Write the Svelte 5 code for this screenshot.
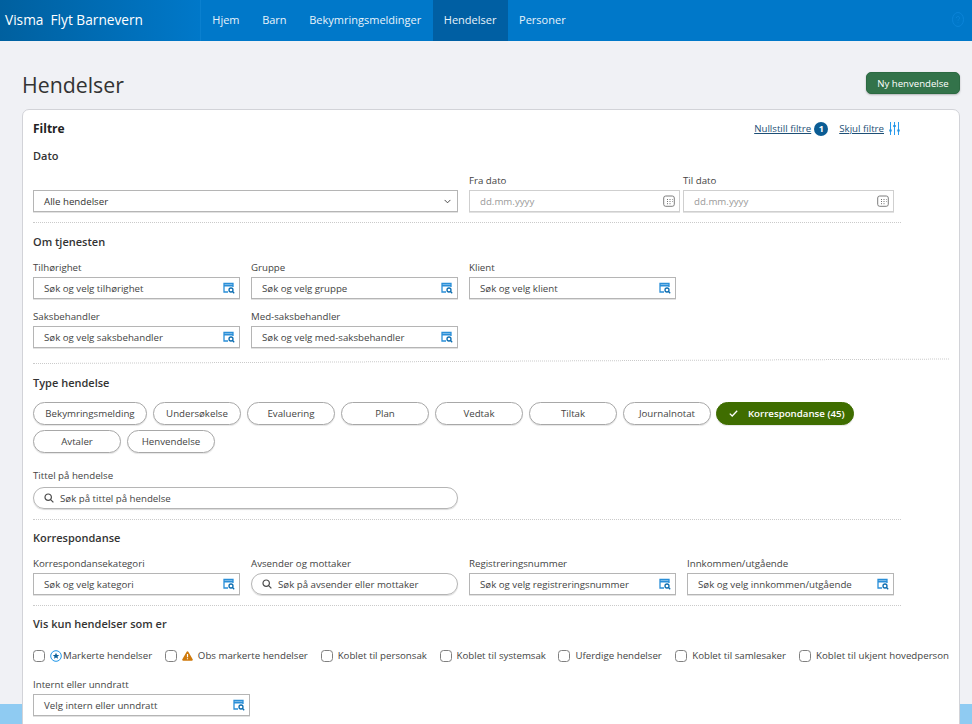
<script lang="ts">
	const nav = ['Hjem', 'Barn', 'Bekymringsmeldinger', 'Hendelser', 'Personer'];
	const chips = [
		{ label: 'Bekymringsmelding', w: 114 },
		{ label: 'Undersøkelse', w: 88 },
		{ label: 'Evaluering', w: 88 },
		{ label: 'Plan', w: 88 },
		{ label: 'Vedtak', w: 88 },
		{ label: 'Tiltak', w: 88 },
		{ label: 'Journalnotat', w: 88 }
	];
	const checks = [
		{ label: 'Koblet til personsak', w: 119 },
		{ label: 'Koblet til systemsak', w: 119 },
		{ label: 'Uferdige hendelser', w: 117 },
		{ label: 'Koblet til samlesaker', w: 124 },
		{ label: 'Koblet til ukjent hovedperson', w: 150 }
	];
</script>

{#snippet lookup()}
	<svg class="lookup" viewBox="0 0 12 12" width="12" height="12" aria-hidden="true">
		<path d="M5 10H1V1.500h9V5" fill="none" stroke="#2a8fd8" stroke-width="1.300" />
		<path d="M1 3.500h9" stroke="#2a8fd8" stroke-width="2" />
		<circle cx="8" cy="8" r="2" fill="none" stroke="#0b6cb0" stroke-width="1.300" />
		<path d="M9.500 9.500l1.700 1.700" stroke="#0b6cb0" stroke-width="1.300" />
	</svg>
{/snippet}

{#snippet calendar()}
	<svg class="lookup" viewBox="0 0 12 12" width="12" height="12" aria-hidden="true">
		<rect x="0.700" y="1" width="10.600" height="10.300" rx="2" fill="none" stroke="#7d7d7d" />
		<path d="M4 4.500h1M6.500 4.500h1M9 4.500h.6M4 6.500h1M6.500 6.500h1M9 6.500h.6M4 8.700h1M6.500 8.700h1" stroke="#6f6f6f" />
	</svg>
{/snippet}

{#snippet searchIcon()}
	<svg viewBox="0 0 10 10" width="10" height="10" aria-hidden="true">
		<circle cx="4.200" cy="4.200" r="3.200" fill="none" stroke="#4a4a4a" stroke-width="1.200" />
		<path d="M6.600 6.600l2.800 2.800" stroke="#4a4a4a" stroke-width="1.200" />
	</svg>
{/snippet}

{#snippet field(label: string, placeholder: string, width: number)}
	<div class="field" style="width:{width}px">
		<span class="label">{label}</span>
		<div class="input">
			<span>{placeholder}</span>
			{@render lookup()}
		</div>
	</div>
{/snippet}

{#snippet dateField(label: string, width: number)}
	<div class="field" style="width:{width}px">
		<span class="label">{label}</span>
		<div class="input date">
			<span>dd.mm.yyyy</span>
			{@render calendar()}
		</div>
	</div>
{/snippet}

{#snippet chip(label: string, width: number)}
	<button class="chip" style="width:{width}px">{label}</button>
{/snippet}

<header class="topbar">
	<div class="brand">Visma&nbsp; Flyt Barnevern</div>
	<nav>
		{#each nav as item}
			<span class="nav-item" class:active={item === 'Hendelser'}>{item}</span>
		{/each}
	</nav>
	<svg class="help" viewBox="0 0 12 15" width="12" height="15" aria-hidden="true">
		<ellipse cx="6" cy="7.500" rx="5.500" ry="7" fill="none" stroke="#0b84d8" />
		<path d="M4.400 6a1.600 1.600 0 1 1 2.300 1.500c-.5.3-.7.6-.7 1.200M6 10.400v.6" fill="none" stroke="#0b84d8" />
	</svg>
</header>

<div class="page">
	<div class="title-row">
		<h1>Hendelser</h1>
		<button class="primary">Ny henvendelse</button>
	</div>

	<main class="card">
		<div class="card-head">
			<h2>Filtre</h2>
			<div class="head-actions">
				<a href="#nullstill">Nullstill filtre</a>
				<span class="count">1</span>
				<a class="hide" href="#skjul">Skjul filtre</a>
				<svg viewBox="0 0 11 13" width="11" height="13" aria-hidden="true">
					<path d="M1.500 0v13M5.500 0v13M9.500 0v13" stroke="#2a9df0" stroke-width="1" />
					<path d="M.3 8.500h2.400M4.300 4h2.400M8.300 8.500h2.400" stroke="#1f8fe0" stroke-width="2" />
				</svg>
			</div>
		</div>

		<h3 class="dato">Dato</h3>
		<div class="row dates">
			<div class="select">
				<span>Alle hendelser</span>
				<svg viewBox="0 0 8 5" width="7" height="5" aria-hidden="true">
					<path d="M.7.7L4 4l3.300-3.300" fill="none" stroke="#333" stroke-width="1" />
				</svg>
			</div>
			<div class="date-pair">
				{@render dateField('Fra dato', 211)}
				{@render dateField('Til dato', 211)}
			</div>
		</div>
		<div class="divider short first"></div>

		<h3>Om tjenesten</h3>
		<div class="row">
			{@render field('Tilhørighet', 'Søk og velg tilhørighet', 207)}
			{@render field('Gruppe', 'Søk og velg gruppe', 207)}
			{@render field('Klient', 'Søk og velg klient', 207)}
		</div>
		<div class="row second">
			{@render field('Saksbehandler', 'Søk og velg saksbehandler', 207)}
			{@render field('Med-saksbehandler', 'Søk og velg med-saksbehandler', 207)}
		</div>
		<div class="divider wide"></div>

		<h3>Type hendelse</h3>
		<div class="chips">
			{#each chips as c}
				{@render chip(c.label, c.w)}
			{/each}
			<button class="chip selected">
				<svg viewBox="0 0 9 7" width="9" height="7" aria-hidden="true">
					<path d="M.8 3.600l2.400 2.400L8.200.8" fill="none" stroke="#fff" stroke-width="1.300" />
				</svg>
				Korrespondanse (45)
			</button>
			{@render chip('Avtaler', 88)}
			{@render chip('Henvendelse', 88)}
		</div>
		<div class="field title-field">
			<span class="label">Tittel på hendelse</span>
			<div class="input search">
				{@render searchIcon()}
				<span>Søk på tittel på hendelse</span>
			</div>
		</div>
		<div class="divider short"></div>

		<h3>Korrespondanse</h3>
		<div class="row">
			{@render field('Korrespondansekategori', 'Søk og velg kategori', 207)}
			<div class="field" style="width:207px">
				<span class="label">Avsender og mottaker</span>
				<div class="input search">
					{@render searchIcon()}
					<span>Søk på avsender eller mottaker</span>
				</div>
			</div>
			{@render field('Registreringsnummer', 'Søk og velg registreringsnummer', 207)}
			{@render field('Innkommen/utgående', 'Søk og velg innkommen/utgående', 207)}
		</div>
		<div class="divider short"></div>

		<h3>Vis kun hendelser som er</h3>
		<div class="checks">
			<label class="check" style="width:132px">
				<span class="box"></span>
				<svg class="star" viewBox="0 0 12 12" width="12" height="12" aria-hidden="true">
					<circle cx="6" cy="6" r="5.300" fill="none" stroke="#1f96e8" />
					<path d="M6 2.800l1 2.100 2.200.2-1.700 1.500.5 2.200L6 7.600 4 8.800l.5-2.200L2.800 5.100 5 4.900z" fill="#0b5f99" />
				</svg>
				Markerte hendelser
			</label>
			<label class="check" style="width:156px">
				<span class="box"></span>
				<svg viewBox="0 0 12 11" width="11" height="10" aria-hidden="true">
					<path d="M6 .3a1 1 0 0 1 .9.5l4.800 8.400a1 1 0 0 1-.9 1.500H1.200a1 1 0 0 1-.9-1.500L5.100.8A1 1 0 0 1 6 .3z" fill="#cf7a0c" />
					<path d="M6 3.200v3.800M6 8v1.100" stroke="#fff" stroke-width="1.300" />
				</svg>
				Obs markerte hendelser
			</label>
			{#each checks as c}
				<label class="check" style="width:{c.w}px"><span class="box"></span>{c.label}</label>
			{/each}
		</div>
		{@render field('Internt eller unndratt', 'Velg intern eller unndratt', 217)}
	</main>
</div>

<style>
	:global(body) {
		margin: 0;
		height: 724px;
		overflow: hidden;
		background: #f0f1f5;
		font-family: 'Open Sans', 'Liberation Sans', sans-serif;
		color: #333;
	}
	.topbar {
		height: 41px;
		display: flex;
		align-items: center;
		background: #0078c9;
		color: #fff;
		position: relative;
	}
	.brand {
		width: 195px;
		padding-left: 5px;
		display: flex;
		align-items: center;
		padding-bottom: 2px;
		box-sizing: content-box;
		height: 39px;
		font-size: 13.700px;
		background: linear-gradient(90deg, #00609f, #0078c9);
		border-right: 1px solid #0a80cf;
	}
	nav {
		display: flex;
		height: 100%;
		font-size: 11px;
	}
	.nav-item {
		display: flex;
		align-items: center;
		padding: 0 11.300px 3px;
		color: #e8f3fb;
	}
	.nav-item.active {
		background: #005fa3;
	}
	.help {
		position: absolute;
		right: 8px;
		top: 12px;
	}
	.page {
		height: 683px;
		padding: 0 12px 0 22px;
		overflow: hidden;
		background: linear-gradient(#f0f1f5 663px, #8fcbf2 663px);
	}
	.title-row {
		height: 68px;
		display: flex;
		align-items: flex-start;
		justify-content: space-between;
	}
	h1 {
		margin: 29px 0 0;
		font-size: 21.300px;
		line-height: 30px;
		font-weight: 400;
		color: #333;
	}
	.primary {
		margin-top: 31px;
		width: 94px;
		height: 22px;
		padding: 0;
		background: #33734a;
		color: #fff;
		font: 400 9.600px 'Open Sans', sans-serif;
		border: 1px solid #2c6a42;
		border-radius: 5px;
		box-shadow: 0 1px 2px rgba(0, 0, 0, 0.25);
	}
	.card {
		box-sizing: border-box;
		height: 640px;
		padding: 0 10px;
		background: #fff;
		border: 1px solid #d2d3d8;
		border-radius: 7px;
	}
	.card-head {
		display: flex;
		justify-content: space-between;
		height: 37px;
		margin-bottom: 2px;
		align-items: center;
		padding-right: 49px;
	}
	h2 {
		margin: 0;
		font-size: 12px;
		font-weight: 700;
		color: #222;
	}
	.head-actions {
		display: flex;
		align-items: center;
		font-size: 9.700px;
	}
	.head-actions a {
		color: #1d4f76;
		text-decoration: underline;
	}
	.count {
		width: 14px;
		height: 14px;
		margin-left: 3px;
		border-radius: 50%;
		background: #0b5c94;
		color: #fff;
		font-size: 9px;
		font-weight: 700;
		text-align: center;
		line-height: 14px;
	}
	.hide {
		margin: 0 5px 0 11px;
	}
	h3 {
		margin: 0 0 13px;
		font-size: 11px;
		line-height: 13px;
		font-weight: 600;
		color: #333;
	}
	.dato {
		margin-bottom: 12px;
	}
	.row {
		display: flex;
		gap: 11px;
	}
	.row.second {
		margin-top: 11px;
	}
	.dates {
		align-items: flex-end;
	}
	.select {
		box-sizing: border-box;
		width: 425px;
		height: 22px;
		padding: 0 6px 0 10px;
		display: flex;
		align-items: center;
		justify-content: space-between;
		border: 1px solid #b5b5b5;
		box-shadow: 0 1px 0 #e2e2e2;
		font-size: 9.700px;
		color: #333;
	}
	.date-pair {
		display: flex;
		gap: 3px;
	}
	.field {
		display: flex;
		flex-direction: column;
	}
	.label {
		font-size: 9.700px;
		line-height: 13px;
		margin-bottom: 3px;
		color: #444;
	}
	.input {
		box-sizing: border-box;
		height: 22px;
		padding: 0 4px 0 10px;
		display: flex;
		align-items: center;
		justify-content: space-between;
		border: 1px solid #b5b5b5;
		box-shadow: 0 1px 0 #e2e2e2;
		font-size: 9.700px;
		color: #444;
		white-space: nowrap;
	}
	.input.date {
		color: #9a9a9a;
		border-color: #cfcfcf;
	}
	.input.search {
		justify-content: flex-start;
		gap: 6px;
		border-radius: 11px;
		box-shadow: 0 1px 1px rgba(0, 0, 0, 0.15);
	}
	.title-field {
		width: 425px;
		margin: 16px 0 1px;
	}
	.title-field .label {
		margin-bottom: 5px;
	}
	.divider {
		height: 0;
		margin: 10px 0 11px;
		border-top: 1px dotted #cacaca;
	}
	.divider.short {
		width: 868px;
	}
	.divider.first {
		margin-bottom: 12px;
	}
	/* this rule runs slightly uphill in the reference */
	.divider.wide {
		margin: 15px 0 12px;
		transform: rotate(-0.28deg);
		transform-origin: 0 0;
	}
	.chips {
		display: flex;
		flex-wrap: wrap;
		gap: 5px 6px;
		width: 830px;
	}
	.chip {
		box-sizing: border-box;
		height: 23px;
		padding: 0;
		background: #fff;
		border: 1px solid #a8a8a8;
		border-radius: 12px;
		font: 400 9.700px 'Open Sans', sans-serif;
		color: #444;
		box-shadow: 0 1px 1px rgba(0, 0, 0, 0.1);
	}
	.chip.selected {
		width: 138px;
		margin-left: -1px;
		padding-left: 4px;
		background: #3f6d00;
		border-color: #3f6d00;
		color: #fff;
		font-size: 9.700px;
		font-weight: 600;
	}
	.chip.selected svg {
		margin-right: 7px;
	}
	.checks {
		display: flex;
		margin: 19px 0 16px;
		height: 13px;
		white-space: nowrap;
		font-size: 9.700px;
	}
	.check {
		display: flex;
		align-items: center;
		gap: 5px;
		color: #444;
	}
	.star {
		margin-right: -4px;
	}
	.box {
		box-sizing: border-box;
		width: 12px;
		height: 12px;
		border: 1px solid #808080;
		border-radius: 3.500px;
	}
</style>
